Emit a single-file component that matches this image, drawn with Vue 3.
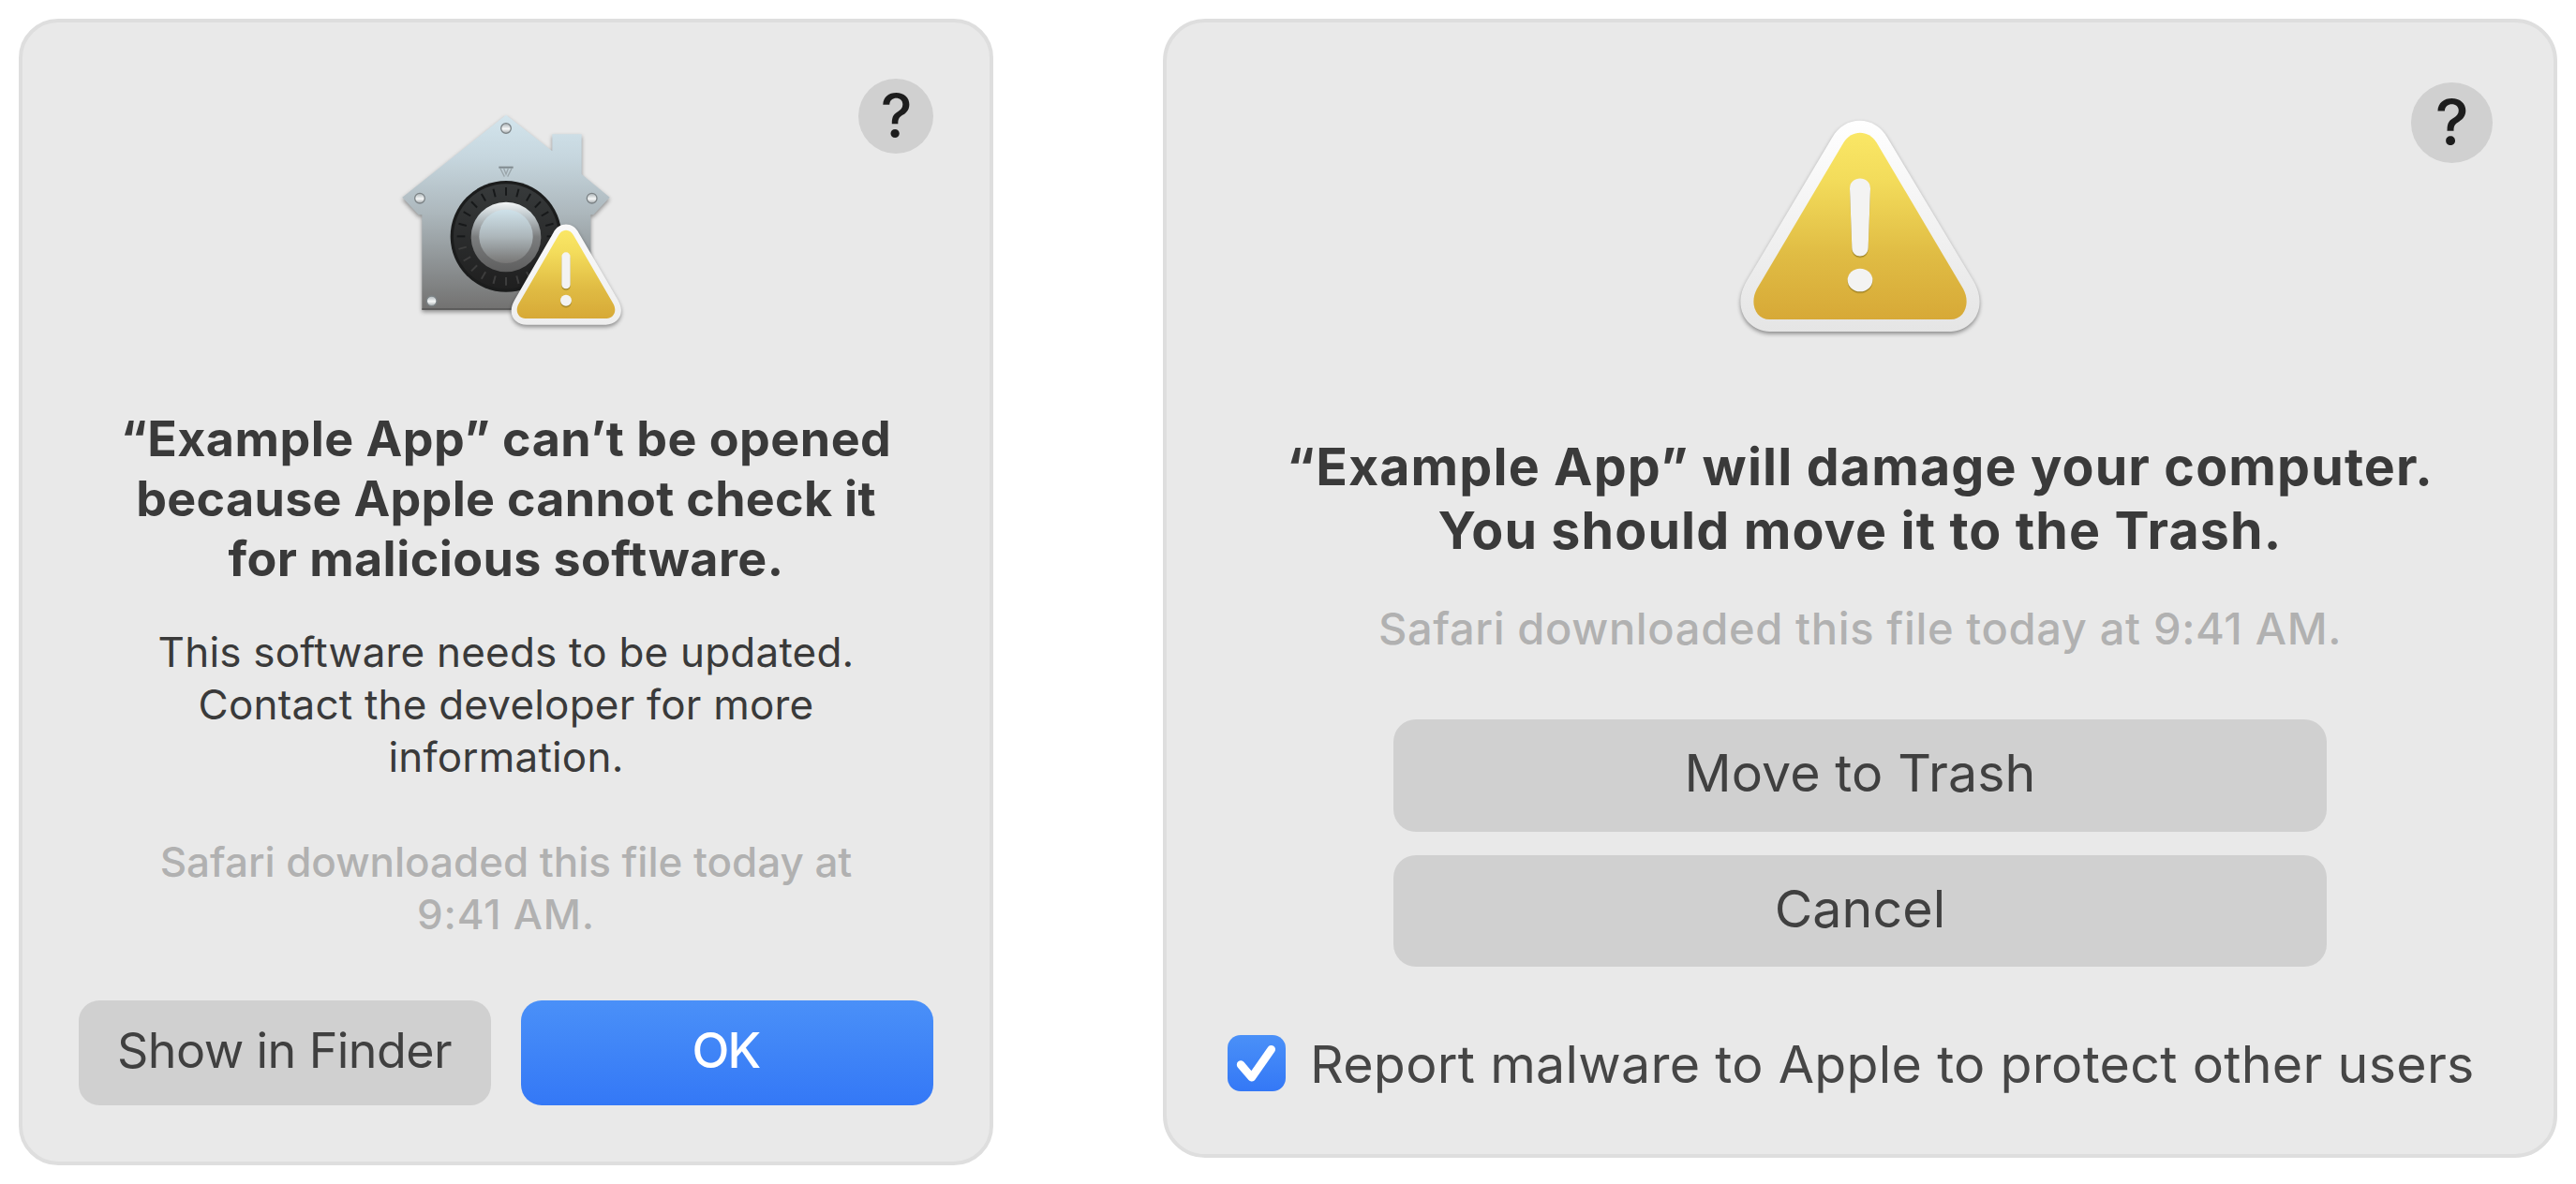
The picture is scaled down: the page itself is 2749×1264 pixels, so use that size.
<script setup>
const ticks = Array.from({ length: 24 }, (_, i) => i * 15)
const screws = [[420, 111], [144, 335], [695, 335], [182, 664]]
</script>

<template>
  <main class="page">
    <section class="card left">
      <button class="help">?</button>
      <svg class="house" viewBox="0 0 870 810">
        <defs>
          <linearGradient id="steel" x1="0" y1="68" x2="0" y2="692" gradientUnits="userSpaceOnUse">
            <stop offset="0" stop-color="#d3e5ed" />
            <stop offset=".22" stop-color="#c6d6de" />
            <stop offset=".5" stop-color="#adb8bd" />
            <stop offset=".75" stop-color="#8f9496" />
            <stop offset="1" stop-color="#727170" />
          </linearGradient>
          <linearGradient id="dial" x1="0" y1="0" x2="0" y2="1">
            <stop offset="0" stop-color="#373a3b" />
            <stop offset="1" stop-color="#1f1f1f" />
          </linearGradient>
          <linearGradient id="rim" x1="0" y1="0" x2="0" y2="1">
            <stop offset="0" stop-color="#f4f6f7" />
            <stop offset=".18" stop-color="#c3ccd0" />
            <stop offset=".5" stop-color="#7b7d7e" />
            <stop offset="1" stop-color="#5e5e5e" />
          </linearGradient>
          <linearGradient id="knob" x1="0" y1="0" x2="0" y2="1">
            <stop offset="0" stop-color="#cfe2ea" />
            <stop offset=".5" stop-color="#adb7bb" />
            <stop offset="1" stop-color="#777675" />
          </linearGradient>
          <linearGradient id="amber" x1="0" y1="0" x2="0" y2="1">
            <stop offset="0" stop-color="#fae766" />
            <stop offset=".25" stop-color="#f3dc5b" />
            <stop offset=".65" stop-color="#e0bc44" />
            <stop offset="1" stop-color="#d7a937" />
          </linearGradient>
          <linearGradient id="frame" x1="0" y1="0" x2="0" y2="1">
            <stop offset="0" stop-color="#fff" />
            <stop offset="1" stop-color="#e5e5e5" />
          </linearGradient>
          <linearGradient id="frame-small" x1="0" y1="0" x2="0" y2="1">
            <stop offset="0" stop-color="#fafafa" />
            <stop offset="1" stop-color="#eeeeee" />
          </linearGradient>
          <linearGradient id="screw" x1="0" y1="0" x2="0" y2="1">
            <stop offset="0" stop-color="#a9b1b5" />
            <stop offset=".55" stop-color="#f6f8f8" />
            <stop offset="1" stop-color="#a2a8ab" />
          </linearGradient>
        </defs>
        <path class="drop" fill="url(#steel)" d="M420 68 568 184V130H662V258L752 332 700 388H691V692H151V388H140L88 332Z" />
        <path d="M151 690H691" stroke="#555" stroke-width="5" />
        <path d="M397 236H443" stroke="#7f898e" stroke-width="6" />
        <path d="M402 240 415 266M413 240 420 258 427 240M438 240 425 266" fill="none" stroke="#9aa5aa" stroke-width="4" />
        <circle cx="420" cy="457" r="178" fill="#1b1c1c" />
        <circle cx="420" cy="457" r="168" fill="url(#dial)" />
        <path v-for="a in ticks" :key="a" d="M420 300V326" :transform="`rotate(${a} 420 457)`" :stroke="a > 90 && a < 270 ? '#3d3d3d' : '#17191a'" stroke-width="6" />
        <circle cx="420" cy="459" r="112" fill="url(#rim)" />
        <circle cx="420" cy="457" r="86" fill="url(#knob)" />
        <circle v-for="p in screws" :key="p[0]" :cx="p[0]" :cy="p[1]" r="16" fill="url(#screw)" stroke="#7c8386" stroke-width="4" />
        <path class="drop" fill="url(#frame-small)" d="M571 446C589 409 635 409 653 446L778 660C806 708 774 740 740 740H486C450 740 420 708 448 660Z" />
        <path fill="url(#amber)" d="M587 455C598 431 626 431 637 455L763 672C778 698 762 720 742 720H482C462 720 446 698 461 672Z" />
        <g class="mark"><rect x="598" y="508" width="28" height="117" rx="14" /><circle cx="612" cy="662" r="18" /></g>
      </svg>
      <h1><span class="t1">“Example App” can’t be opened</span><span class="t2">because Apple cannot check it</span><span class="t3">for malicious software.</span></h1>
      <p class="body"><span>This software needs to be updated.</span><span>Contact the developer for more</span><span>information.</span></p>
      <p class="muted"><span>Safari downloaded this file today at</span><span class="time">9:41 AM.</span></p>
      <div class="row">
        <button class="btn">Show in Finder</button>
        <button class="btn primary">OK</button>
      </div>
    </section>

    <section class="card right">
      <button class="help">?</button>
      <svg class="warn" viewBox="0 0 930 810">
        <path class="drop" fill="url(#frame)" d="M375 112C415 38 513 38 553 112L828 570C880 660 820 732 755 732H175C110 732 50 660 102 570Z" />
        <path fill="url(#amber)" d="M413 125C438 85 492 85 517 125L795 595C820 640 800 693 755 693H175C130 693 110 640 135 595Z" />
        <g class="mark"><path d="M432 274C432 231 498 231 498 274L491 464C490 499 440 499 439 464Z" /><ellipse cx="465" cy="567" rx="40" ry="37" /></g>
      </svg>
      <h1><span>“Example App” will damage your computer.</span><span>You should move it to the Trash.</span></h1>
      <p class="muted">Safari downloaded this file today at 9:41 AM.</p>
      <div class="stack">
        <button class="btn">Move to Trash</button>
        <button class="btn">Cancel</button>
      </div>
      <div class="check">
        <svg class="box" viewBox="0 0 184 182"><path d="M42 95 77 136 140 46" /></svg>
        <span>Report malware to Apple to protect other users</span>
      </div>
    </section>
  </main>
</template>

<style>
body { margin: 0; background: #fff; }
</style>

<style scoped>
.page { width: 2749px; height: 1264px; box-sizing: border-box; padding: 20px; display: flex; justify-content: space-between; align-items: flex-start; font-family: Inter, "Liberation Sans", sans-serif; color: #3a3a3a; }
.card { position: relative; box-sizing: border-box; display: flex; flex-direction: column; align-items: center; background: #e9e9e9; border: 4px solid #dedede; text-align: center; }
.left { width: 1040px; height: 1224px; border-radius: 42px; padding-top: 76px; }
.right { width: 1488px; height: 1216px; border-radius: 45px; padding-top: 86px; }
button { border: 0; padding: 0; font-family: inherit; color: inherit; }
.help { position: absolute; border-radius: 50%; background: #d0d0d0; color: #1d1d1d; font-weight: 500; }
.left .help { width: 80px; height: 80px; right: 60px; top: 60px; font-size: 64px; line-height: 80px; padding-left: 1px; }
.right .help { width: 87.5px; height: 85.5px; right: 65px; top: 64px; font-size: 68px; line-height: 85px; padding-left: 1px; }
svg { display: block; flex: none; }
.house { width: 290px; height: 270px; margin-left: 9.5px; }
.warn { width: 310px; height: 270px; }
.drop { filter: drop-shadow(0 7px 6px rgba(0, 0, 0, .4)); }
.mark { fill: #f3f3f2; filter: drop-shadow(0 4px 2px rgba(110, 90, 10, .6)); }
h1, p { margin: 0; white-space: nowrap; }
h1 span, p span { display: block; }
.left h1 { margin-top: 67px; font-size: 52px; line-height: 64px; }
.t1 { letter-spacing: .48px; }
.t2 { letter-spacing: .29px; }
.t3 { letter-spacing: .41px; }
.left p { font-size: 44px; line-height: 56px; }
.left .body { margin-top: 39px; letter-spacing: .2px; }
.left .muted { margin-top: 56px; letter-spacing: -.04px; }
.left .time { letter-spacing: .8px; }
.muted { color: #b1b1b1; font-weight: 450; }
.row { display: flex; gap: 32px; margin-top: 64px; }
.btn { background: #d0d0d0; color: #404040; }
.row .btn { width: 440px; height: 112px; border-radius: 22px; font-size: 52px; padding-bottom: 6px; padding-right: 1px; letter-spacing: -.6px; }
.row .primary { background: linear-gradient(#4a90f8, #3478f6); color: #fff; font-weight: 500; letter-spacing: -1.8px; padding-right: 3px; }
.right h1 { margin-top: 83.5px; font-size: 55.5px; line-height: 68px; letter-spacing: 1.13px; }
.right .muted { margin-top: 41px; font-size: 47px; line-height: 60px; letter-spacing: .65px; }
.stack { display: flex; flex-direction: column; gap: 25px; margin-top: 67.5px; }
.stack .btn { width: 996px; height: 119.5px; border-radius: 24px; font-size: 55.5px; padding-bottom: 6px; letter-spacing: .1px; }
.check { display: flex; align-items: center; align-self: flex-start; margin: 72px 0 0 65px; font-size: 55.5px; line-height: 60px; white-space: nowrap; letter-spacing: .3px; color: #464646; }
.check span { padding-top: 2px; }
.box { width: 61.5px; height: 60.5px; border-radius: 14px; background: linear-gradient(#4a90f8, #3478f6); margin-right: 26.5px; }
.box path { fill: none; stroke: #fff; stroke-width: 26; stroke-linecap: round; stroke-linejoin: round; }
</style>
